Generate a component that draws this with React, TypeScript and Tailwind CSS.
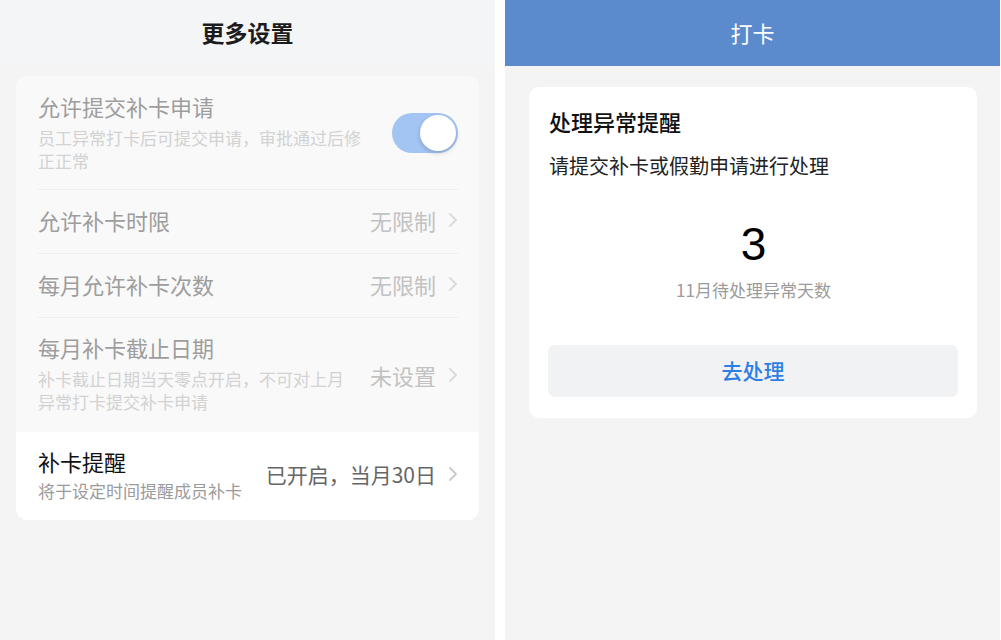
import React from "react";

const font = { fontFamily: '"Noto Sans CJK SC", "Noto Sans", sans-serif' };

function Chevron({ color }: { color: string }) {
  return (
    <svg width="10" height="16" viewBox="0 0 10 16" className="ml-[12px] shrink-0">
      <path d="M2 2 L8 8 L2 14" fill="none" stroke={color} strokeWidth="1.8" strokeLinecap="round" strokeLinejoin="round" />
    </svg>
  );
}

function Divider() {
  return <div className="h-px bg-[#efefef]" />;
}

function SimpleRow({ title, value }: { title: string; value: string }) {
  return (
    <div className="flex items-center justify-between h-[63px] pb-[3px]">
      <span className="text-[22px] leading-[30px] text-[#9d9d9d]">{title}</span>
      <div className="flex items-center">
        <span className="text-[22px] leading-[30px] text-[#c2c2c2]">{value}</span>
        <Chevron color="#dadada" />
      </div>
    </div>
  );
}

export default function App() {
  return (
    <div className="flex w-[1001px] h-[640px] bg-white overflow-hidden" style={font}>
      {/* Left panel */}
      <div className="w-[495px] h-full flex flex-col bg-[#f4f4f4]">
        <div className="h-[66px] flex items-center justify-center bg-[#f4f5f7]">
          <span className="text-[23px] font-bold text-[#1c1c1c] mb-[2px]">更多设置</span>
        </div>
        <div className="mx-[16px] mt-[10px] rounded-[12px] overflow-hidden bg-white">
          <div className="bg-[#f9f9f9] px-[22px] pr-[21px]">
            {/* Row 1 */}
            <div className="flex items-center justify-between pt-[15px] pb-[17px]">
              <div className="w-[332px]">
                <div className="text-[22px] leading-[30px] text-[#9d9d9d]">允许提交补卡申请</div>
                <div className="mt-[5px] text-[17px] leading-[23px] text-[#d2d2d2]">
                  员工异常打卡后可提交申请，审批通过后修正正常
                </div>
              </div>
              <div className="relative w-[66px] h-[40px] rounded-full bg-[#a3c5f3] shrink-0 mt-[2px]">
                <div className="absolute right-[2px] top-[2px] w-[36px] h-[36px] rounded-full bg-white shadow-[0_2px_5px_rgba(0,0,0,0.18)]" />
              </div>
            </div>
            <Divider />
            <SimpleRow title="允许补卡时限" value="无限制" />
            <Divider />
            <SimpleRow title="每月允许补卡次数" value="无限制" />
            <Divider />
            {/* Row 4 */}
            <div className="flex items-center justify-between pt-[14px] pb-[19px]">
              <div className="w-[320px]">
                <div className="text-[22px] leading-[30px] text-[#9d9d9d]">每月补卡截止日期</div>
                <div className="mt-[5px] text-[17px] leading-[23px] text-[#d2d2d2]">
                  补卡截止日期当天零点开启，不可对上月异常打卡提交补卡申请
                </div>
              </div>
              <div className="flex items-center mt-[4px]">
                <span className="text-[22px] leading-[30px] text-[#c2c2c2]">未设置</span>
                <Chevron color="#dadada" />
              </div>
            </div>
          </div>
          {/* Row 5 */}
          <div className="bg-white px-[22px] pr-[21px] flex items-center justify-between pt-[14px] pb-[18px]">
            <div>
              <div className="text-[22px] leading-[30px] text-[#111111]">补卡提醒</div>
              <div className="mt-[3px] text-[17px] leading-[23px] text-[#9b9b9b]">将于设定时间提醒成员补卡</div>
            </div>
            <div className="flex items-center">
              <span className="text-[21px] leading-[30px] text-[#666666]">已开启，当月30日</span>
              <Chevron color="#c9c9c9" />
            </div>
          </div>
        </div>
      </div>

      {/* Gap */}
      <div className="w-[10px] h-full bg-white" />

      {/* Right panel */}
      <div className="flex-1 h-full flex flex-col bg-[#f4f4f4] border-r border-white">
        <div className="h-[66px] flex items-center justify-center bg-[#5b8bcc]">
          <span className="text-[22px] text-white mb-[2px]">打卡</span>
        </div>
        <div className="ml-[24px] mr-[23px] mt-[21px] rounded-[10px] bg-white px-[20px] pr-[19px] pt-[18px] pb-[21px]">
          <div className="text-[22px] leading-[32px] font-medium text-[#111111]">处理异常提醒</div>
          <div className="mt-[15px] text-[20px] leading-[28px] text-[#222222]">请提交补卡或假勤申请进行处理</div>
          <div className="mt-[38px] text-center text-[46px] leading-[52px] text-black" style={{ fontFamily: '"Liberation Sans", Arial, sans-serif' }}>3</div>
          <div className="mt-[8px] text-center text-[17px] leading-[24px] text-[#9b9b9b]">11月待处理异常天数</div>
          <div className="mt-[43px] h-[52px] rounded-[7px] bg-[#f1f2f4] flex items-center justify-center ml-[-1px]">
            <span className="text-[21px] font-medium text-[#2d7fe6]">去处理</span>
          </div>
        </div>
      </div>
    </div>
  );
}
